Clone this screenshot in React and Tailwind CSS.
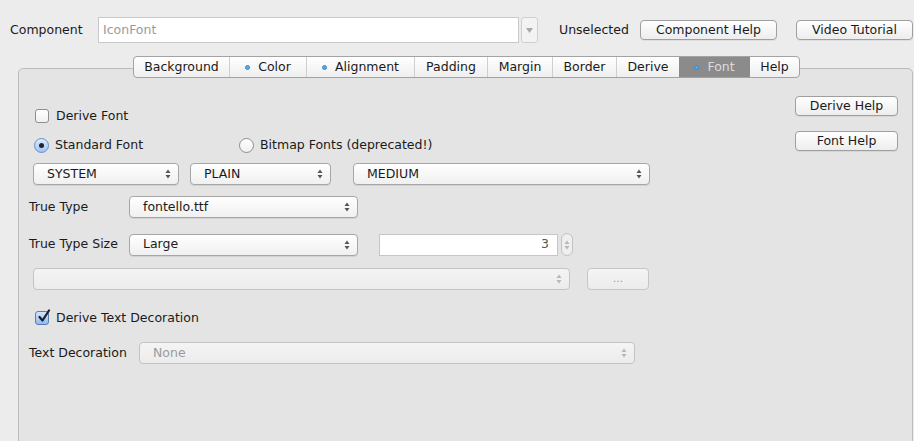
import React from "react";

const font = { fontFamily: '"DejaVu Sans", "Liberation Sans", sans-serif' };

const tabs = [
  { label: "Background", w: "w-[95px]" },
  { label: "Color", w: "w-[77px]", dot: true },
  { label: "Alignment", w: "w-[108px]", dot: true },
  { label: "Padding", w: "w-[73px]" },
  { label: "Margin", w: "w-[65px]" },
  { label: "Border", w: "w-[64px]" },
  { label: "Derive", w: "w-[63px]" },
  { label: "Font", w: "w-[71px]", dot: true, active: true },
  { label: "Help", w: "w-[49px]" },
];

function Arrows({ light }) {
  const c = light ? "#b8b8b8" : "#555";
  return (
    <svg width="6" height="10" viewBox="0 0 6 10" className="shrink-0">
      <path d="M3 0.5 L5.5 4 L0.5 4 Z" fill={c} />
      <path d="M3 9.5 L5.5 6 L0.5 6 Z" fill={c} />
    </svg>
  );
}

function Select({ value, className, disabled, pad = "pl-[13px]" }) {
  return (
    <div
      className={`flex items-center justify-between h-[22px] rounded-[4px] border ${
        disabled
          ? "border-[#c4c4c4] bg-gradient-to-b from-[#f4f4f4] to-[#ececec] text-[#9a9a9a]"
          : "border-[#a6a6a6] bg-gradient-to-b from-[#ffffff] to-[#f0f0f0] text-[#1a1a1a] shadow-[0_1px_0_rgba(0,0,0,0.08)]"
      } ${pad} pr-[7px] ${className}`}
    >
      <span className="leading-none">{value}</span>
      <Arrows light={disabled} />
    </div>
  );
}

function Button({ children, className }) {
  return (
    <button
      className={`h-[20px] rounded-[4px] border border-[#9f9f9f] bg-gradient-to-b from-[#ffffff] to-[#ededed] text-[#1a1a1a] leading-none shadow-[0_1px_0_rgba(0,0,0,0.06)] ${className}`}
    >
      {children}
    </button>
  );
}

function Checkbox({ checked }) {
  if (checked) {
    return (
      <div className="w-[14px] h-[14px] rounded-[3px] border border-[#5a7fb0] bg-gradient-to-b from-[#d4e6fb] to-[#8fbaf0] flex items-center justify-center relative">
        <svg width="16" height="16" viewBox="0 0 16 16" className="absolute -top-[4px] left-[0px]">
          <path d="M3.5 9 L6.5 12.5 L13 2.5" stroke="#1c1c2c" strokeWidth="2.2" fill="none" strokeLinecap="round" strokeLinejoin="round" />
        </svg>
      </div>
    );
  }
  return (
    <div className="w-[14px] h-[14px] rounded-[3px] border border-[#8e8e8e] bg-gradient-to-b from-[#ffffff] to-[#f1f1f1]" />
  );
}

function Radio({ checked }) {
  if (checked) {
    return (
      <div className="w-[15px] h-[15px] rounded-full border border-[#6b8fc2] bg-gradient-to-b from-[#dcebfc] to-[#9ec4f2] flex items-center justify-center">
        <div className="w-[5px] h-[5px] rounded-full bg-[#1f2430]" />
      </div>
    );
  }
  return (
    <div className="w-[15px] h-[15px] rounded-full border border-[#8e8e8e] bg-gradient-to-b from-[#ffffff] to-[#f0f0f0]" />
  );
}

export default function App() {
  return (
    <div
      className="w-[914px] h-[441px] overflow-hidden bg-[#ececec] text-[12.5px] text-[#1a1a1a]"
      style={font}
    >
      {/* Top row */}
      <div className="flex items-center pt-[17px] pl-[10px] h-[43px]">
        <span className="w-[88px]">Component</span>
        <div className="flex h-[26px] w-[440px]">
          <div className="flex-1 bg-white border border-[#c9c9c9] flex items-center pl-[4px] text-[#9a9a9a]">
            IconFont
          </div>
          <div className="w-[17px] ml-[2px] border border-[#d0d0d0] rounded-[3px] bg-[#f3f3f3] flex items-center justify-center">
            <svg width="7" height="5" viewBox="0 0 7 5">
              <path d="M0 0 L7 0 L3.5 5 Z" fill="#a8a8a8" />
            </svg>
          </div>
        </div>
        <span className="ml-[21px] w-[81px]">Unselected</span>
        <Button className="w-[137px]">Component Help</Button>
        <Button className="w-[117px] ml-[19px]">Video Tutorial</Button>
      </div>

      {/* Tabs */}
      <div className="mt-[13px] flex pl-[133px] relative z-10">
        <div className="flex h-[22px] rounded-[4px] border border-[#a3a3a3] bg-gradient-to-b from-[#ffffff] to-[#efefef] overflow-hidden">
          {tabs.map((t, i) => (
            <div
              key={t.label}
              className={`${t.w} flex items-center justify-center gap-[8px] ${
                t.active
                  ? "bg-[#8b8b8b] text-[#dcdcdc]"
                  : "text-[#1a1a1a]"
              } ${i > 0 && !t.active && !tabs[i - 1].active ? "border-l border-[#cfcfcf]" : ""}`}
            >
              {t.dot && (
                <span className="w-[5px] h-[5px] rounded-full bg-[#5aaaea] border border-[#3a86c8]" />
              )}
              <span className="leading-none">{t.label}</span>
            </div>
          ))}
        </div>
      </div>

      {/* Panel */}
      <div className="ml-[18px] w-[895px] h-[390px] -mt-[10px] rounded-[5px] border border-[#bcbcbc] bg-[#e4e4e4] flex">
        <div className="flex-1 flex flex-col pt-[38px] pl-[10px]">
          <div className="flex items-center h-[18px] pl-[6px] gap-[7px]">
            <Checkbox />
            <span>Derive Font</span>
          </div>

          <div className="flex items-center h-[18px] mt-[11px] pl-[5px]">
            <div className="flex items-center gap-[6px] w-[205px]">
              <Radio checked />
              <span>Standard Font</span>
            </div>
            <div className="flex items-center gap-[6px]">
              <Radio />
              <span>Bitmap Fonts (deprecated!)</span>
            </div>
          </div>

          <div className="flex mt-[9px] pl-[4px]">
            <Select value="SYSTEM" className="w-[146px]" />
            <Select value="PLAIN" className="w-[141px] ml-[11px]" />
            <Select value="MEDIUM" className="w-[297px] ml-[22px]" />
          </div>

          <div className="flex items-center mt-[11px]">
            <span className="w-[100px]">True Type</span>
            <Select value="fontello.ttf" className="w-[229px]" />
          </div>

          <div className="flex items-center mt-[15px]">
            <span className="w-[100px]">True Type Size</span>
            <Select value="Large" className="w-[229px]" />
            <div className="ml-[21px] w-[179px] h-[22px] bg-white border border-[#c6c6c6] flex items-center justify-end pr-[8px] text-[#555]">
              3
            </div>
            <div className="ml-[3px] w-[12px] h-[23px] rounded-full border border-[#c2c2c2] bg-[#efefef] flex items-center justify-center">
              <Arrows light />
            </div>
          </div>

          <div className="flex items-center mt-[12px] pl-[4px]">
            <Select value="" disabled className="w-[537px]" />
            <div className="ml-[17px] w-[62px] h-[22px] rounded-[4px] border border-[#c6c6c6] bg-gradient-to-b from-[#f4f4f4] to-[#ececec] flex items-center justify-center text-[#a0a0a0] text-[11px]">
              ...
            </div>
          </div>

          <div className="flex items-center h-[18px] mt-[19px] pl-[6px] gap-[7px]">
            <Checkbox checked />
            <span>Derive Text Decoration</span>
          </div>

          <div className="flex items-center mt-[15px]">
            <span className="w-[110px]">Text Decoration</span>
            <Select value="None" disabled className="w-[496px]" />
          </div>
        </div>

        <div className="w-[117px] flex flex-col pt-[27px]">
          <Button className="w-[103px]">Derive Help</Button>
          <Button className="w-[103px] mt-[15px]">Font Help</Button>
        </div>
      </div>
    </div>
  );
}
